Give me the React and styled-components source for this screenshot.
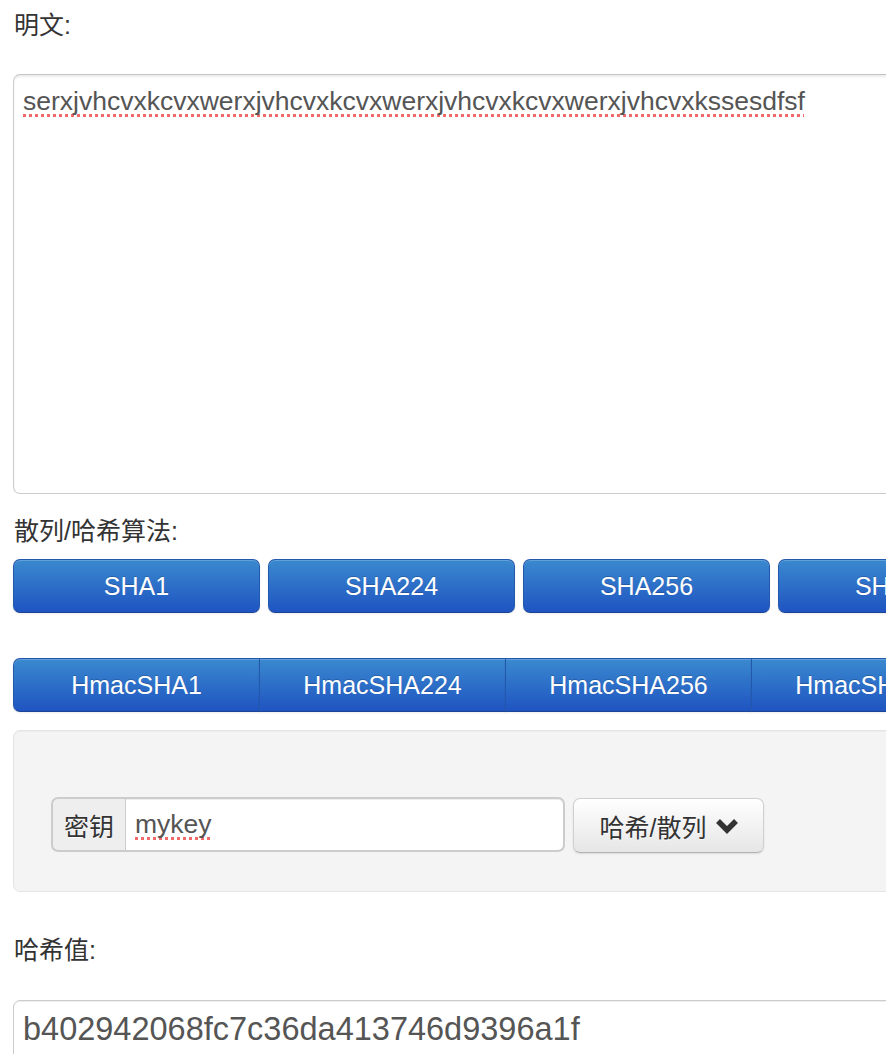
import React from "react";
import styled, { createGlobalStyle } from "styled-components";

const Global = createGlobalStyle`
  html, body { margin: 0; padding: 0; overflow: hidden; background: #fff; }
  body {
    font-family: "Liberation Sans", Arial, "Noto Sans CJK SC", sans-serif;
    color: #333;
  }
`;

const Page = styled.div`
  width: 1300px;
  padding: 7px 0 0 13px;
  display: flex;
  flex-direction: column;
  align-items: flex-start;
`;

const Label = styled.div`
  font-size: 25px;
  line-height: 36px;
  color: #333;
  padding-left: 1px;
  margin-top: ${(p) => p.$mt || 0}px;
`;

const Spell = styled.span`
  text-decoration: underline dotted #f06a6a;
  text-decoration-thickness: 3px;
  text-underline-offset: 4px;
  text-decoration-skip-ink: none;
`;

const TextArea = styled.div`
  box-sizing: border-box;
  width: 1200px;
  height: 420px;
  margin-top: 31px;
  padding: 8px 9px;
  border: 1px solid #cccccc;
  border-top-color: #c4c4c4;
  border-radius: 7px;
  box-shadow: inset 0 2px 2px rgba(0, 0, 0, 0.08);
  font-size: 26.5px;
  line-height: 36px;
  color: #555;
  background: #fff;
`;

const ButtonRow = styled.div`
  display: flex;
  gap: 9px;
  margin-top: 10px;
`;

const BlueButton = styled.button`
  box-sizing: border-box;
  width: 247px;
  height: 54px;
  flex: none;
  padding: 0;
  font-family: "Liberation Sans", Arial, sans-serif;
  font-size: 25px;
  color: #fff;
  text-shadow: 0 -1px 0 rgba(0, 0, 0, 0.2);
  background: linear-gradient(to bottom, #3a89cf, #1f54c1);
  border: 1px solid #2458ac;
  border-bottom-color: #1c4495;
  border-radius: ${(p) => (p.$grouped ? "0" : "7px")};
  box-shadow: inset 0 1px 0 rgba(255, 255, 255, 0.2), 0 1px 2px rgba(0, 0, 0, 0.08);
  &:first-child {
    border-radius: 7px ${(p) => (p.$grouped ? "0 0" : "7px 7px")} 7px;
  }
  & + & {
    margin-left: ${(p) => (p.$grouped ? "-1px" : "0")};
  }
`;

const Group = styled.div`
  display: flex;
  margin-top: 45px;
  border-radius: 7px;
`;

const Well = styled.div`
  box-sizing: border-box;
  width: 1200px;
  margin-top: 18px;
  padding: 66px 0 38px 37px;
  background: #f4f4f4;
  border: 1px solid #e4e4e4;
  border-radius: 7px;
  box-shadow: inset 0 1px 1px rgba(0, 0, 0, 0.03);
  display: flex;
  align-items: flex-start;
  gap: 8px;
`;

const InputGroup = styled.div`
  display: flex;
  height: 55px;
`;

const AddOn = styled.span`
  box-sizing: border-box;
  width: 75px;
  height: 55px;
  display: flex;
  align-items: center;
  justify-content: center;
  font-size: 25px;
  color: #333;
  background: #eeeeee;
  border: 2px solid #cccccc;
  border-right-width: 1px;
  border-radius: 7px 0 0 7px;
  text-shadow: 0 1px 0 #fff;
`;

const KeyInput = styled.div`
  box-sizing: border-box;
  width: 439px;
  height: 55px;
  padding: 0 9px;
  display: flex;
  align-items: center;
  font-size: 26.5px;
  color: #555;
  background: #fff;
  border: 2px solid #cccccc;
  border-left: none;
  border-radius: 0 7px 7px 0;
  box-shadow: inset 0 1px 1px rgba(0, 0, 0, 0.075);
`;

const DropButton = styled.button`
  box-sizing: border-box;
  width: 191px;
  height: 55px;
  margin-top: 1px;
  display: flex;
  align-items: center;
  justify-content: center;
  gap: 9px;
  padding: 0 0 0 2px;
  font-family: "Liberation Sans", Arial, "Noto Sans CJK SC", sans-serif;
  font-size: 25px;
  color: #333;
  background: linear-gradient(to bottom, #ffffff, #e6e6e6);
  border: 1px solid #cfcfcf;
  border-bottom-color: #b3b3b3;
  border-radius: 7px;
  box-shadow: inset 0 1px 0 rgba(255, 255, 255, 0.2), 0 1px 2px rgba(0, 0, 0, 0.1);
  text-shadow: 0 1px 1px rgba(255, 255, 255, 0.75);
`;

const Chevron = () => (
  <svg width="24" height="17" viewBox="0 0 24 17">
    <polyline
      points="3,4 12,13 21,4"
      fill="none"
      stroke="#333"
      strokeWidth="5.5"
      strokeLinejoin="miter"
    />
  </svg>
);

const Output = styled.div`
  box-sizing: border-box;
  width: 1200px;
  height: 80px;
  margin-top: 32px;
  padding: 8px 9px;
  font-size: 32.5px;
  line-height: 40px;
  color: #555;
  background: #fff;
  border: 1px solid #cccccc;
  border-radius: 7px;
  box-shadow: inset 0 1px 1px rgba(0, 0, 0, 0.075);
`;

const hashes = ["SHA1", "SHA224", "SHA256", "SHA384", "SHA512"];
const hmacs = ["HmacSHA1", "HmacSHA224", "HmacSHA256", "HmacSHA384", "HmacSHA512"];

export default function App() {
  return (
    <>
      <Global />
      <Page>
        <Label>明文:</Label>
        <TextArea>
          <Spell>serxjvhcvxkcvxwerxjvhcvxkcvxwerxjvhcvxkcvxwerxjvhcvxkssesdfsf</Spell>
        </TextArea>
        <Label $mt={19}>散列/哈希算法:</Label>
        <ButtonRow>
          {hashes.map((h) => (
            <BlueButton key={h}>{h}</BlueButton>
          ))}
        </ButtonRow>
        <Group>
          {hmacs.map((h) => (
            <BlueButton key={h} $grouped>
              {h}
            </BlueButton>
          ))}
        </Group>
        <Well>
          <InputGroup>
            <AddOn>密钥</AddOn>
            <KeyInput>
              <Spell>mykey</Spell>
            </KeyInput>
          </InputGroup>
          <DropButton>
            哈希/散列
            <Chevron />
          </DropButton>
        </Well>
        <Label $mt={40}>哈希值:</Label>
        <Output>b402942068fc7c36da413746d9396a1f</Output>
      </Page>
    </>
  );
}
